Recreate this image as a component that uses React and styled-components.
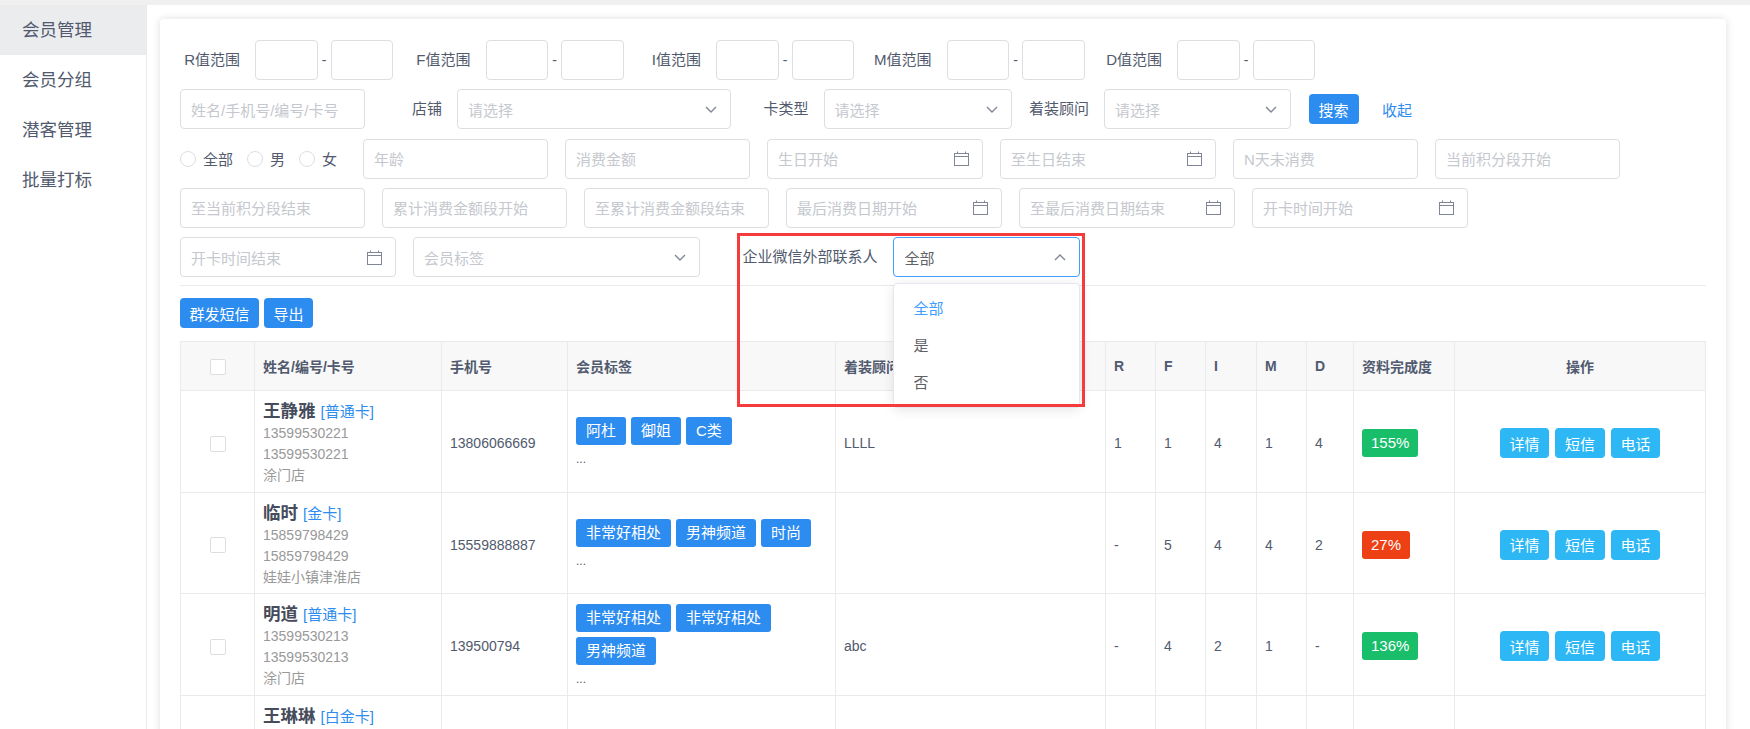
import React from 'react'
import styled, { createGlobalStyle } from 'styled-components'

const GlobalStyle = createGlobalStyle`
  html, body {
    margin: 0;
    padding: 0;
    background: #fff;
  }
  body {
    font-family: 'Liberation Sans', 'Noto Sans CJK SC', sans-serif;
    color: #515a6e;
  }
  * {
    box-sizing: border-box;
  }
`

const Page = styled.div`
  position: relative;
  width: 1750px;
  height: 729px;
  overflow: hidden;
  display: flex;
  flex-direction: column;
  background: #fff;
`

const TopStrip = styled.div`
  height: 5px;
  flex-shrink: 0;
  background: #f0f0f0;
`

const Layout = styled.div`
  flex: 1;
  display: flex;
  min-height: 0;
`

const Sidebar = styled.nav`
  width: 147px;
  flex-shrink: 0;
  border-right: 1px solid #e8eaec;
`

const MenuItem = styled.div`
  height: 50px;
  line-height: 50px;
  padding-left: 22px;
  font-size: 17.5px;
  color: #515a6e;
  background: ${(p) => (p.$active ? '#ebecee' : 'transparent')};
`

const Main = styled.main`
  flex: 1;
  padding: 14px 24px 0 13px;
  min-width: 0;
`

const Card = styled.section`
  background: #fff;
  border-radius: 4px;
  box-shadow: 0 0 9px rgba(0, 0, 0, 0.13);
  padding: 21px 20px 20px;
  min-height: 800px;
`

const Filters = styled.div`
  display: flex;
  flex-direction: column;
  gap: 9.25px;
`

const FormRow = styled.div`
  display: flex;
  align-items: center;
  gap: 17.5px;
  height: 40px;
`

const Group = styled.div`
  display: flex;
  align-items: center;
  flex-shrink: 0;
`

const Label = styled.label`
  width: ${(p) => p.$w || 75}px;
  flex-shrink: 0;
  padding-right: 15px;
  text-align: right;
  font-size: 15px;
  line-height: 40px;
  color: #515a6e;
  white-space: nowrap;
`

const Field = styled.div`
  position: relative;
  width: ${(p) => p.$w}px;
  height: 40px;
  flex-shrink: 0;
  display: flex;
  align-items: center;
  padding: 0 ${(p) => (p.$icon ? 13 : 10)}px 0 10px;
  border: 1px solid ${(p) => (p.$focus ? '#409eff' : '#dcdee2')};
  border-radius: 4px;
  background: #fff;
  font-size: 15px;
`

const Placeholder = styled.span`
  flex: 1;
  color: #c5c8ce;
  white-space: nowrap;
  overflow: hidden;
`

const Value = styled.span`
  flex: 1;
  color: #606266;
  padding-left: 1px;
`

const Dash = styled.span`
  width: 13px;
  text-align: center;
  font-size: 14px;
  color: #515a6e;
`

const RadioGroup = styled.div`
  width: 165.5px;
  flex-shrink: 0;
  display: flex;
  align-items: center;
  white-space: nowrap;
`

const RadioItem = styled.label`
  display: flex;
  align-items: center;
  flex-shrink: 0;
  gap: 7px;
  margin-right: 14px;
  font-size: 15px;
  color: #515a6e;
  white-space: nowrap;
  &:last-child {
    margin-right: 0;
  }
`

const RadioDot = styled.span`
  width: 16px;
  height: 16px;
  flex-shrink: 0;
  border: 1px solid #dcdee2;
  border-radius: 50%;
  background: #fff;
`

const Button = styled.button`
  height: 30px;
  padding: 0 9.5px;
  border: none;
  border-radius: 4px;
  font-family: inherit;
  font-size: 15px;
  color: #fff;
  background: ${(p) => (p.$info ? '#2db7f5' : '#2d8cf0')};
  cursor: pointer;
  flex-shrink: 0;
`

const TextLink = styled.a`
  padding: 0 6px;
  font-size: 15px;
  color: #2d8cf0;
`

const SelectWrap = styled.div`
  position: relative;
`

const Dropdown = styled.ul`
  position: absolute;
  top: 46px;
  left: 0;
  width: 100%;
  margin: 0;
  padding: 6px 0;
  list-style: none;
  background: #fff;
  border: 1px solid #e4e7ed;
  border-radius: 4px;
  box-shadow: 0 2px 12px rgba(0, 0, 0, 0.1);
  z-index: 10;
`

const Option = styled.li`
  height: 37px;
  line-height: 37px;
  padding-left: 20px;
  font-size: 15px;
  color: ${(p) => (p.$selected ? '#409eff' : '#606266')};
`

const Divider = styled.div`
  height: 1px;
  background: #e8eaec;
  margin: 8px 0 12px;
`

const Toolbar = styled.div`
  display: flex;
  gap: 5px;
  margin-bottom: 13px;
`

const Table = styled.table`
  width: 1525px;
  table-layout: fixed;
  border-collapse: collapse;
  border: 1px solid #e8eaec;
  font-size: 14px;
  color: #515a6e;
`

const Th = styled.th`
  height: 49px;
  padding: 0 8px;
  background: #f8f8f9;
  border-right: 1px solid #e8eaec;
  border-bottom: 1px solid #e8eaec;
  font-weight: 700;
  text-align: ${(p) => p.$align || 'left'};
  white-space: nowrap;
`

const Tr = styled.tr`
  height: 101.7px;
`

const Td = styled.td`
  padding: 9px 8px 5.7px;
  border-right: 1px solid #e8eaec;
  border-bottom: 1px solid #e8eaec;
  vertical-align: ${(p) => p.$valign || 'middle'};
  text-align: ${(p) => p.$align || 'left'};
`

const Checkbox = styled.span`
  display: inline-block;
  width: 16px;
  height: 16px;
  border: 1px solid #dcdee2;
  border-radius: 2px;
  background: #fff;
  vertical-align: middle;
`

const NameLine = styled.div`
  display: flex;
  align-items: baseline;
  gap: 5px;
  height: 23px;
  line-height: 23px;
  white-space: nowrap;
`

const Name = styled.b`
  font-size: 17.5px;
  color: #464c5b;
`

const CardType = styled.span`
  font-size: 15px;
  color: #2d8cf0;
`

const SubLine = styled.div`
  height: 21px;
  line-height: 21px;
  color: #999;
`

const TagList = styled.div`
  display: flex;
  flex-wrap: wrap;
  gap: 5px;
  margin-bottom: 4px;
`

const Tag = styled.span`
  height: 28px;
  line-height: 28px;
  padding: 0 10px;
  border-radius: 3px;
  background: #2d8cf0;
  color: #fff;
  font-size: 15px;
`

const More = styled.div`
  line-height: 20px;
  font-size: 12px;
  color: #515a6e;
`

const Badge = styled.span`
  display: inline-block;
  height: 28px;
  line-height: 28px;
  padding: 0 9px;
  border-radius: 3px;
  font-size: 15px;
  color: #fff;
  background: ${(p) => (p.$low ? '#ed4014' : '#19be6b')};
`

const Ops = styled.div`
  display: flex;
  justify-content: center;
  gap: 6.5px;
`

const Annotation = styled.div`
  position: absolute;
  left: 737px;
  top: 233px;
  width: 348px;
  height: 174px;
  border: 3px solid #f53b3b;
  pointer-events: none;
  z-index: 20;
`

const Chevron = ({ up }) => (
  <svg width="12" height="7" viewBox="0 0 12 7" style={{ flexShrink: 0 }}>
    <polyline
      points={up ? '1,6 6,1 11,6' : '1,1 6,6 11,1'}
      fill="none"
      stroke="#808695"
      strokeWidth="1.4"
    />
  </svg>
)

const CalendarIcon = () => (
  <svg width="15" height="15" viewBox="0 0 15 15" style={{ flexShrink: 0 }}>
    <rect x="0.5" y="2.5" width="14" height="12" fill="none" stroke="#808695" />
    <line x1="0.5" y1="5.5" x2="14.5" y2="5.5" stroke="#808695" />
    <line x1="3.5" y1="0.5" x2="3.5" y2="2.5" stroke="#808695" />
    <line x1="11.5" y1="0.5" x2="11.5" y2="2.5" stroke="#808695" />
  </svg>
)

const TextInput = ({ w = 184.5, ph }) => (
  <Field $w={w}>
    <Placeholder>{ph}</Placeholder>
  </Field>
)

const DateInput = ({ w = 215.5, ph }) => (
  <Field $w={w} $icon>
    <Placeholder>{ph}</Placeholder>
    <CalendarIcon />
  </Field>
)

const Select = ({ w, ph = '请选择' }) => (
  <Field $w={w} $icon>
    <Placeholder>{ph}</Placeholder>
    <Chevron />
  </Field>
)

const members = [
  {
    name: '王静雅',
    card: '普通卡',
    lines: ['13599530221', '13599530221', '涂门店'],
    phone: '13806066669',
    tags: ['阿杜', '御姐', 'C类'],
    adviser: 'LLLL',
    rfimd: ['1', '1', '4', '1', '4'],
    rate: '155%',
  },
  {
    name: '临时',
    card: '金卡',
    lines: ['15859798429', '15859798429', '娃娃小镇津淮店'],
    phone: '15559888887',
    tags: ['非常好相处', '男神频道', '时尚'],
    adviser: '',
    rfimd: ['-', '5', '4', '4', '2'],
    rate: '27%',
    low: true,
  },
  {
    name: '明道',
    card: '普通卡',
    lines: ['13599530213', '13599530213', '涂门店'],
    phone: '139500794',
    tags: ['非常好相处', '非常好相处', '男神频道'],
    adviser: 'abc',
    rfimd: ['-', '4', '2', '1', '-'],
    rate: '136%',
  },
  {
    name: '王琳琳',
    card: '白金卡',
    lines: [],
    phone: '',
    tags: [],
    adviser: '',
    rfimd: ['', '', '', '', ''],
    rate: '',
  },
]

const colWidths = [74, 187, 126, 268, 270, 50, 50, 51, 50, 47, 101, 251]

export default function App() {
  return (
    <Page>
      <GlobalStyle />
      <TopStrip />
      <Layout>
        <Sidebar>
          <MenuItem $active>会员管理</MenuItem>
          <MenuItem>会员分组</MenuItem>
          <MenuItem>潜客管理</MenuItem>
          <MenuItem>批量打标</MenuItem>
        </Sidebar>
        <Main>
          <Card>
            <Filters>
              <FormRow>
                {['R', 'F', 'I', 'M', 'D'].map((k) => (
                  <Group key={k}>
                    <Label>{k}值范围</Label>
                    <Field $w={62.5} />
                    <Dash>-</Dash>
                    <Field $w={62.5} />
                  </Group>
                ))}
              </FormRow>
              <FormRow>
                <TextInput ph="姓名/手机号/编号/卡号" />
                <Group>
                  <Label>店铺</Label>
                  <Select w={274} />
                </Group>
                <Group>
                  <Label>卡类型</Label>
                  <Select w={188} />
                </Group>
                <Group>
                  <Label>着装顾问</Label>
                  <Select w={187} />
                </Group>
                <Button style={{ width: 50 }}>搜索</Button>
                <TextLink>收起</TextLink>
              </FormRow>
              <FormRow>
                <RadioGroup>
                  {['全部', '男', '女'].map((t) => (
                    <RadioItem key={t}>
                      <RadioDot />
                      {t}
                    </RadioItem>
                  ))}
                </RadioGroup>
                <TextInput ph="年龄" />
                <TextInput ph="消费金额" />
                <DateInput ph="生日开始" />
                <DateInput ph="至生日结束" />
                <TextInput ph="N天未消费" />
                <TextInput ph="当前积分段开始" />
              </FormRow>
              <FormRow>
                <TextInput ph="至当前积分段结束" />
                <TextInput ph="累计消费金额段开始" />
                <TextInput ph="至累计消费金额段结束" />
                <DateInput ph="最后消费日期开始" />
                <DateInput ph="至最后消费日期结束" />
                <DateInput ph="开卡时间开始" />
              </FormRow>
              <FormRow>
                <DateInput ph="开卡时间结束" />
                <Select w={287} ph="会员标签" />
                <Group>
                  <Label $w={175}>企业微信外部联系人</Label>
                  <SelectWrap>
                    <Field $w={187} $icon $focus>
                      <Value>全部</Value>
                      <Chevron up />
                    </Field>
                    <Dropdown>
                      <Option $selected>全部</Option>
                      <Option>是</Option>
                      <Option>否</Option>
                    </Dropdown>
                  </SelectWrap>
                </Group>
              </FormRow>
            </Filters>
            <Divider />
            <Toolbar>
              <Button>群发短信</Button>
              <Button>导出</Button>
            </Toolbar>
            <Table>
              <colgroup>
                {colWidths.map((w, i) => (
                  <col key={i} style={{ width: w }} />
                ))}
              </colgroup>
              <thead>
                <tr>
                  <Th $align="center">
                    <Checkbox />
                  </Th>
                  <Th>姓名/编号/卡号</Th>
                  <Th>手机号</Th>
                  <Th>会员标签</Th>
                  <Th>着装顾问</Th>
                  <Th>R</Th>
                  <Th>F</Th>
                  <Th>I</Th>
                  <Th>M</Th>
                  <Th>D</Th>
                  <Th>资料完成度</Th>
                  <Th $align="center">操作</Th>
                </tr>
              </thead>
              <tbody>
                {members.map((m) => (
                  <Tr key={m.name}>
                    <Td $align="center">
                      <Checkbox />
                    </Td>
                    <Td $valign={m.lines.length ? 'middle' : 'top'}>
                      <NameLine>
                        <Name>{m.name}</Name>
                        <CardType>[{m.card}]</CardType>
                      </NameLine>
                      {m.lines.map((l, i) => (
                        <SubLine key={i}>{l}</SubLine>
                      ))}
                    </Td>
                    <Td>{m.phone}</Td>
                    <Td>
                      {m.tags.length > 0 && (
                        <>
                          <TagList>
                            {m.tags.map((t, i) => (
                              <Tag key={i}>{t}</Tag>
                            ))}
                          </TagList>
                          <More>...</More>
                        </>
                      )}
                    </Td>
                    <Td>{m.adviser}</Td>
                    {m.rfimd.map((v, i) => (
                      <Td key={i}>{v}</Td>
                    ))}
                    <Td>{m.rate && <Badge $low={m.low}>{m.rate}</Badge>}</Td>
                    <Td $align="center">
                      {m.rate && (
                        <Ops>
                          <Button $info>详情</Button>
                          <Button $info>短信</Button>
                          <Button $info>电话</Button>
                        </Ops>
                      )}
                    </Td>
                  </Tr>
                ))}
              </tbody>
            </Table>
          </Card>
        </Main>
      </Layout>
      <Annotation />
    </Page>
  )
}
